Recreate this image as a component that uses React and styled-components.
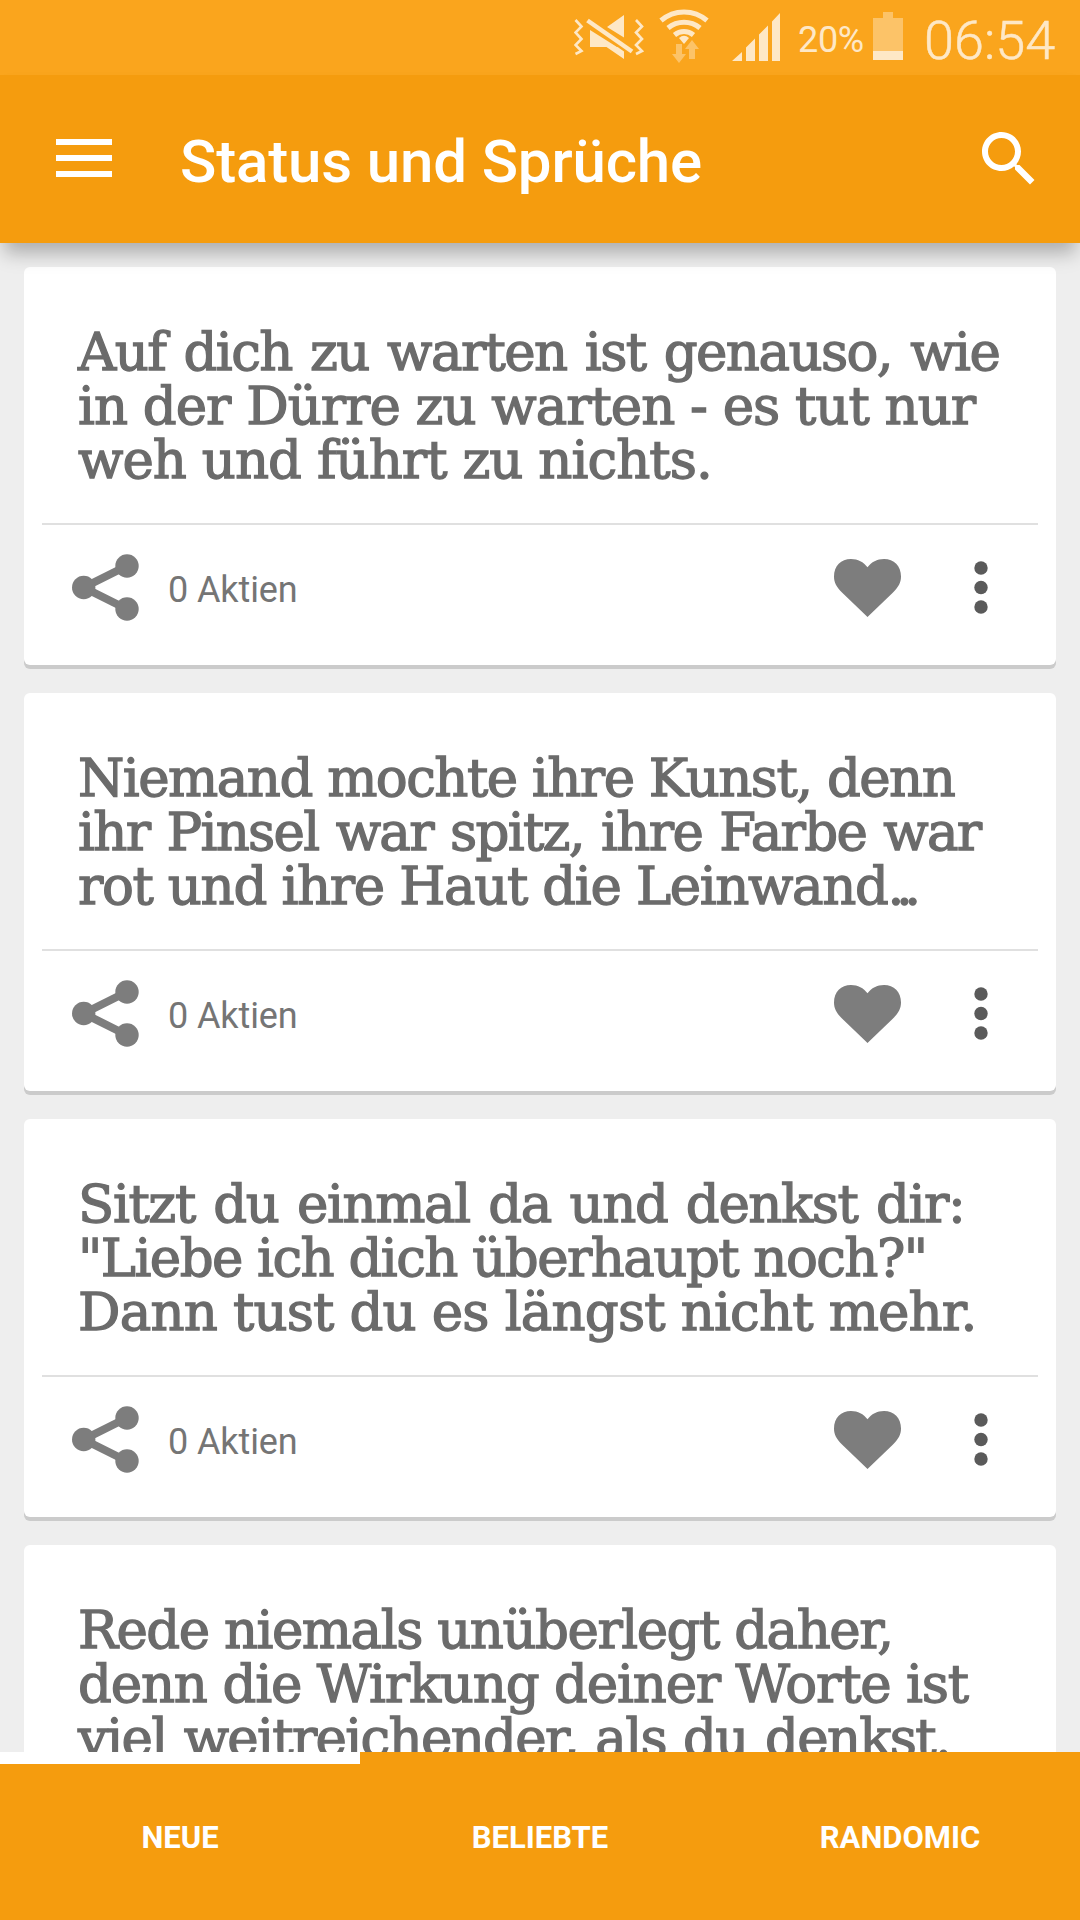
import React, { useState } from 'react';
import styled, { createGlobalStyle } from 'styled-components';

const quotes = [
  {
    id: 1,
    lines: [
      { text: 'Auf dich zu warten ist genauso, wie', spacing: -1.6, gap: 3 },
      { text: 'in der Dürre zu warten - es tut nur', spacing: -1.03 },
      { text: 'weh und führt zu nichts.', spacing: -0.98 },
    ],
  },
  {
    id: 2,
    lines: [
      { text: 'Niemand mochte ihre Kunst, denn', spacing: -1.54 },
      { text: 'ihr Pinsel war spitz, ihre Farbe war', spacing: -1.7, gap: 2 },
      { text: 'rot und ihre Haut die Leinwand', spacing: -1.38, dots: true },
    ],
  },
  {
    id: 3,
    lines: [
      { text: 'Sitzt du einmal da und denkst dir:', spacing: -1.4, gap: 3 },
      { text: '"Liebe ich dich überhaupt noch?"', spacing: -1.56 },
      { text: 'Dann tust du es längst nicht mehr.', spacing: -0.85 },
    ],
  },
  {
    id: 4,
    lines: [
      { text: 'Rede niemals unüberlegt daher,', spacing: -1.5 },
      { text: 'denn die Wirkung deiner Worte ist', spacing: -1.2 },
      { text: 'viel weitreichender, als du denkst.', spacing: -1.68, gap: 2 },
    ],
  },
];

const tabs = ['NEUE', 'BELIEBTE', 'RANDOMIC'];

const VibrateIcon = () => (
  <svg width='70' height='48' viewBox='0 0 70 48'>
    <g fill='none' stroke='#fee8c6' strokeWidth='2.6'>
      <path d='M1.5 7l6 6.500-6 6 6 6.500-6 6 6 6-6 3' />
      <path d='M62 7l6 6.500-6 6 6 6.500-6 6 6 6-6 3' />
    </g>
    <path d='M33 14L50 2v22.500zM16 17l27 17h7v12L32.500 34H16z' fill='#fee8c6' />
    <path d='M13.500 7.500l44.500 31' stroke='#faa51d' strokeWidth='9' />
    <path d='M13.500 7.500l44.500 31' stroke='#fee8c6' strokeWidth='4.500' />
  </svg>
);

const WifiIcon = () => (
  <svg width='52' height='56' viewBox='0 0 52 56'>
    <g fill='none' stroke='#fee8c6' strokeWidth='5'>
      <path d='M2 13.500a35 35 0 0 1 46 0' />
      <path d='M9 21a25 25 0 0 1 32 0' />
      <path d='M15.500 28a15 15 0 0 1 19 0' />
    </g>
    <path d='M20 31q5-4.500 10 0l-5 6z' fill='#fee8c6' />
    <path
      d='M17 37h6v10h4l-7 9-7-9h4zM30 52V42h-4l7-9 7 9h-4v10z'
      fill='#fcc368'
    />
  </svg>
);

const SignalIcon = () => (
  <svg width='48' height='48' viewBox='0 0 48 48' fill='#fee8c6'>
    <path d='M0 48l10-9v9zM14 34.500l9-9V48h-9zM27 21.500l9-9V48h-9zM40 8.500L48 0v48h-8z' />
  </svg>
);

const BatteryIcon = () => (
  <svg width='30' height='48' viewBox='0 0 30 48'>
    <path d='M10 0h10v6h10v33H0V6h10z' fill='#fcc368' />
    <path d='M0 39h30v9H0z' fill='#fee8c6' />
  </svg>
);

const MenuIcon = () => (
  <svg width='56' height='38' viewBox='0 0 56 38' fill='#fff'>
    <path d='M0 0h56v6H0zM0 16h56v6H0zM0 32h56v6H0z' />
  </svg>
);

const SearchIcon = () => (
  <svg width='72' height='72' viewBox='0 0 24 24' fill='#fff'>
    <path d='M15.5 14h-.79l-.28-.27C15.41 12.59 16 11.11 16 9.5 16 5.91 13.09 3 9.5 3S3 5.91 3 9.5 5.910 16 9.5 16c1.610 0 3.090-.59 4.230-1.570l.27.28v.79l5 4.990L20.490 19l-4.990-5zm-6 0C7.010 14 5 11.990 5 9.5S7.010 5 9.5 5 14 7.010 14 9.5 11.990 14 9.5 14z' />
  </svg>
);

const ShareIcon = () => (
  <svg width='67' height='67' viewBox='0 0 67 67' fill='#7d7d7d'>
    <path d='M54.700 12L11.700 33.500l43 21.500' fill='none' stroke='#7d7d7d' strokeWidth='8' />
    <circle cx='11.700' cy='33.500' r='11.700' />
    <circle cx='55' cy='12' r='11.700' />
    <circle cx='55' cy='55' r='11.700' />
  </svg>
);

const HeartIcon = () => (
  <svg width='67' height='58' viewBox='0 0 67 58' fill='#7d7d7d'>
    <path d='M33.500 58L8 33.500C2.500 28 0 23.500 0 17.500 0 7 7 0 17 0c7 0 12.500 3 16.500 8.300C37.500 3 43 0 50 0c10 0 17 7 17 17.500 0 6-2.500 10.500-8 16z' />
  </svg>
);

const MoreIcon = () => (
  <svg width='14' height='53' viewBox='0 0 14 53' fill='#5a5a5a'>
    <circle cx='7' cy='7' r='6.700' />
    <circle cx='7' cy='26.500' r='6.700' />
    <circle cx='7' cy='46' r='6.700' />
  </svg>
);

const Quote = ({ lines }) => (
  <Card>
    <QuoteText>
      {lines.map(({ text, spacing, gap = 0, dots }) => (
        <Line $spacing={spacing} $gap={gap} key={text}>
          {text}
          {dots && <Dots>...</Dots>}
        </Line>
      ))}
    </QuoteText>
    <Divider />
    <Actions>
      <ShareIcon />
      <Shares>0 Aktien</Shares>
      <HeartIcon />
      <MoreIcon />
    </Actions>
  </Card>
);

const App = () => {
  const [active, setActive] = useState('NEUE');

  return (
    <Screen>
      <GlobalStyle />
      <Status>
        <VibrateIcon />
        <WifiIcon />
        <SignalIcon />
        <Percent>20%</Percent>
        <BatteryIcon />
        <Clock>06:54</Clock>
      </Status>
      <AppBar>
        <MenuIcon />
        <Title>Status und Sprüche</Title>
        <SearchIcon />
      </AppBar>
      <List>
        {quotes.map(({ id, lines }) => (
          <Quote lines={lines} key={id} />
        ))}
      </List>
      <Tabs>
        {tabs.map(tab => (
          <Tab $active={tab === active} onClick={() => setActive(tab)} key={tab}>
            {tab}
          </Tab>
        ))}
      </Tabs>
    </Screen>
  );
};

const GlobalStyle = createGlobalStyle`
  * {
    box-sizing: border-box;
    margin: 0;
    padding: 0;
  }

  body {
    font-family: Roboto, sans-serif;
    background: #eee;
  }

  svg {
    display: block;
    flex-shrink: 0;
  }
`;

const Screen = styled.div`
  display: flex;
  flex-direction: column;
  width: 1080px;
  height: 1920px;
  overflow: hidden;
  background: #eee;
`;

const Status = styled.div`
  display: flex;
  align-items: flex-start;
  flex-shrink: 0;
  height: 75px;
  padding: 13px 24px 0 574px;
  background: #faa51d;
  color: #fee8c6;

  svg:nth-of-type(2) {
    margin: -6px 0 0 15px;
  }

  svg:nth-of-type(3) {
    margin-left: 21px;
  }

  svg:nth-of-type(4) {
    margin: -1px 0 0 9px;
  }
`;

const Percent = styled.span`
  width: 66px;
  margin: 6px 0 0 18px;
  font-size: 36px;
  line-height: 42px;
  letter-spacing: -0.3px;
`;

const Clock = styled.span`
  margin: -4px 0 0 21px;
  font-size: 54px;
  font-weight: 300;
  line-height: 64px;
  -webkit-text-stroke: 0.5px #fee8c6;
`;

const AppBar = styled.header`
  display: flex;
  align-items: center;
  flex-shrink: 0;
  height: 168px;
  padding: 0 35px 2px 56px;
  background: #f59c0e;
  box-shadow: 0 14px 18px -4px rgba(0, 0, 0, 0.28);
  z-index: 1;

  svg:last-child {
    margin-top: 2px;
  }
`;

const Title = styled.h1`
  flex: 1;
  margin: 6px 0 0 68px;
  color: #fff;
  font-size: 60px;
  font-weight: 500;
  letter-spacing: -0.15px;
`;

const List = styled.main`
  display: flex;
  flex: 1;
  flex-direction: column;
  gap: 28px;
  min-height: 0;
  padding: 24px 24px 0;
  overflow: hidden;
`;

const Card = styled.article`
  flex-shrink: 0;
  height: 398px;
  border-radius: 6px;
  background: #fff;
  box-shadow: 0 4px 0 #cbcbcb;
`;

const QuoteText = styled.div`
  padding: 58px 0 36px 54px;
`;

const Line = styled.p`
  color: #6b6b6b;
  font-family: 'DejaVu Serif', serif;
  font-size: 53px;
  letter-spacing: ${({ $spacing }) => $spacing}px;
  word-spacing: ${({ $gap }) => $gap}px;
  line-height: 54px;
  white-space: nowrap;
  -webkit-text-stroke: 1.3px #6b6b6b;
`;

const Dots = styled.span`
  letter-spacing: -8.5px;
`;

const Divider = styled.hr`
  height: 2px;
  margin: 0 18px;
  border: 0;
  background: #e0e0e0;
`;

const Actions = styled.div`
  display: flex;
  align-items: center;
  height: 125px;
  padding: 0 68px 0 48px;

  svg:last-child {
    margin-left: 73px;
  }
`;

const Shares = styled.span`
  flex: 1;
  margin-left: 29px;
  padding-top: 4px;
  color: #757575;
  font-size: 36px;
  letter-spacing: -0.1px;
`;

const Tabs = styled.nav`
  display: flex;
  flex-shrink: 0;
  height: 168px;
  background: #f59c0e;
`;

const Tab = styled.button`
  flex: 1;
  padding: 2px 0 0;
  border: 0;
  border-top: 12px solid ${({ $active }) => ($active ? '#fff' : '#f59c0e')};
  border-bottom: 12px solid #f59c0e;
  background: #f59c0e;
  color: #fff;
  font-family: Roboto, sans-serif;
  font-size: 31px;
  font-weight: 700;
`;

export default App;
